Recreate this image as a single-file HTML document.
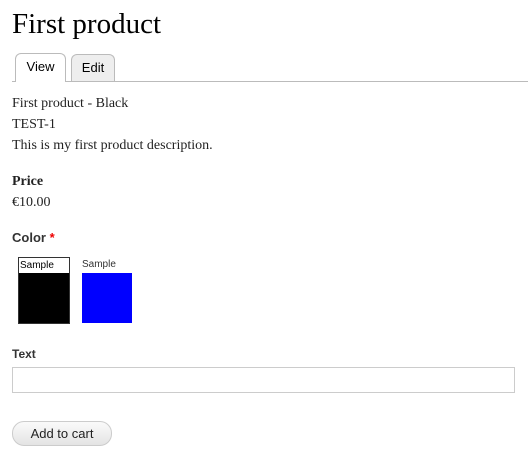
<!DOCTYPE html>
<html><head><style>
body{margin:0;width:528px;height:471px;background:#fff;position:relative;overflow:hidden;color:#222;font-family:"Liberation Serif",serif}
.a{position:absolute;white-space:nowrap}
.s{font-family:"Liberation Sans",sans-serif}
</style></head><body>
<div class="a" style="left:12px;top:8px;font-size:29px;color:#000">First product</div>
<div class="a" style="left:12px;top:81px;width:516px;height:1px;background:#bbb"></div>
<div class="a s" style="left:15px;top:53px;width:49px;height:28px;border:1px solid #bbb;border-bottom:none;border-radius:6px 6px 0 0;background:#fff;font-size:13px;text-align:center;line-height:26px;color:#000">View</div>
<div class="a s" style="left:71px;top:54px;width:42px;height:26px;border:1px solid #bbb;border-bottom:none;border-radius:6px 6px 0 0;background:#eee;font-size:13px;text-align:center;line-height:25px;color:#000">Edit</div>
<div class="a" style="left:12px;top:93px;font-size:14px;line-height:21px">First product - Black<br>TEST-1<br>This is my first product description.</div>
<div class="a" style="left:12px;top:174px;font-size:14px;font-weight:bold">Price</div>
<div class="a" style="left:12px;top:195px;font-size:14px">€10.00</div>
<div class="a s" style="left:12px;top:230px;font-size:13px;font-weight:bold;color:#333">Color <span style="color:#e00">*</span></div>
<div class="a" style="left:18px;top:257px;width:50px;height:65px;border:1px solid #333;background:#000"><div class="s" style="background:#fff;height:15px;font-size:10px;line-height:15px;color:#000;padding-left:1px">Sample</div></div>
<div class="a s" style="left:82px;top:259px;font-size:10px;color:#333">Sample</div>
<div class="a" style="left:82px;top:273px;width:50px;height:50px;background:#00f"></div>
<div class="a s" style="left:12px;top:347px;font-size:12px;font-weight:bold;color:#333">Text</div>
<div class="a" style="left:12px;top:367px;width:501px;height:24px;border:1px solid #ccc"></div>
<div class="a s" style="left:12px;top:421px;width:98px;height:23px;border:1px solid #ccc;border-radius:12px;background:linear-gradient(#fafafa,#e4e4e4);font-size:13px;text-align:center;line-height:23px;color:#222">Add to cart</div>
</body></html>
